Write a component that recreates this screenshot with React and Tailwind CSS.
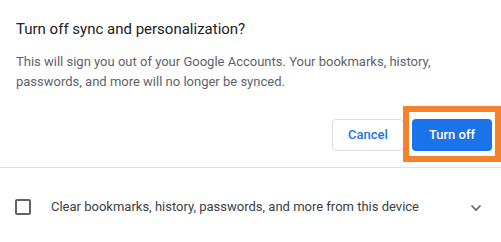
export default function App() {
  return (
    <div className="w-[501px] h-[242px] bg-white overflow-hidden font-['Roboto',sans-serif]">
      {/* Header */}
      <div className="pl-4 pr-3 pt-[18px]">
        <h1 className="text-[15px]/[22px] text-[#202124]">
          Turn off sync and personalization?
        </h1>
        <p className="mt-[12px] text-[13px]/[20px] text-[#5f6368]">
          This will sign you out of your Google Accounts. Your bookmarks, history,
          <br />
          passwords, and more will no longer be synced.
        </p>
      </div>

      <div className="flex justify-end gap-2 pr-[9px] mt-[27px]">
        <button className="h-8 w-[72px] rounded border border-[#dadce0] text-[13px] font-medium text-[#1a73e8]">
          Cancel
        </button>
        <div className="relative">
          <button className="h-8 w-[80px] rounded bg-[#1a73e8] text-[13px] font-medium text-white">
            Turn off
          </button>
          <span className="absolute left-[-9px] right-[-9px] top-[-13px] bottom-[-11px] border-[6px] border-[#f5822a] pointer-events-none" />
        </div>
      </div>

      <div className="mt-[16px] border-t border-[#e0e0e0]" />

      <div className="flex items-center h-[80px] pb-[2px] pl-[15px] pr-[19px]">
        <span className="w-4 h-4 rounded-[2px] border-2 border-[#5f6368]" />
        <span className="ml-5 text-[13px] text-[#3c4043] flex-1">
          Clear bookmarks, history, passwords, and more from this device
        </span>
        <svg width="12" height="8" viewBox="0 0 12 8" className="mt-[2px]">
          <polyline points="1.5,1.5 6,6 10.5,1.5" fill="none" stroke="#5f6368" strokeWidth="1.6" />
        </svg>
      </div>
    </div>
  );
}
